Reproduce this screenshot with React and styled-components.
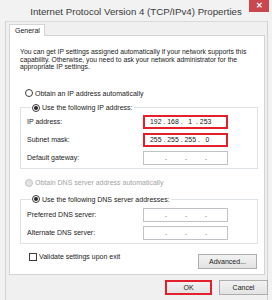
import React from 'react';
import styled, { createGlobalStyle } from 'styled-components';

const GlobalStyle = createGlobalStyle`
  html, body {
    margin: 0;
    padding: 0;
    background: #f0f0f0;
  }
  body {
    font-family: 'Liberation Sans', Arial, sans-serif;
    color: #1a1a1a;
  }
`;

const Window = styled.div`
  width: 272px;
  height: 300px;
  display: flex;
  flex-direction: column;
  background: #f2f2f2;
  overflow: hidden;
`;

const TitleBar = styled.div`
  height: 21px;
  display: grid;
  grid-template-columns: 1fr auto 1fr;
  align-items: start;
  flex-shrink: 0;
`;

const Title = styled.div`
  font-size: 9.7px;
  line-height: 12px;
  color: #3a3a3a;
  padding-top: 6px;
  white-space: nowrap;
`;

const CloseSlot = styled.div`
  display: flex;
  justify-content: flex-end;
  padding-right: 3px;
`;

const CloseButton = styled.div`
  width: 20px;
  height: 12px;
  background: #c9474d;
  color: #fff;
  font-size: 8px;
  font-weight: bold;
  line-height: 12px;
  text-align: center;
`;

const Body = styled.div`
  flex: 1;
  margin: 0 4px 0 5px;
  border-left: 1px solid #d2d2d2;
  border-right: 1px solid #d2d2d2;
  border-top: 1px solid #d9d9d9;
  background: #f0f0f0;
  padding: 2px 2px 0 3px;
  display: flex;
  flex-direction: column;
`;

const TabStrip = styled.div`
  display: flex;
  position: relative;
  z-index: 1;
  margin-bottom: -1px;
`;

const Tab = styled.div`
  width: 36px;
  height: 12px;
  box-sizing: border-box;
  background: #fff;
  border: 1px solid #d4d4d4;
  border-bottom: none;
  font-size: 7px;
  line-height: 11px;
  padding-left: 5px;
`;

const Panel = styled.div`
  width: 256px;
  height: 240px;
  box-sizing: border-box;
  background: #fff;
  border: 1px solid #d4d4d4;
  display: flex;
  flex-direction: column;
  padding: 12px 7px 0 10px;
`;

const Intro = styled.p`
  margin: 0;
  font-size: 6.8px;
  line-height: 7.6px;
  color: #1a1a1a;
`;

const OptionRow = styled.label`
  display: flex;
  align-items: center;
  gap: 2px;
  height: 10px;
  font-size: 7px;
  color: ${p => (p.disabled ? '#a3a3a3' : '#1a1a1a')};
  margin-left: 5px;
  margin-top: ${p => p.top}px;
`;

const Radio = styled.span`
  width: 8px;
  height: 8px;
  box-sizing: border-box;
  border-radius: 50%;
  border: 1px solid ${p => (p.disabled ? '#c4c4c4' : '#3c3c3c')};
  background: ${p => (p.disabled ? '#e4e4e4' : '#fff')};
  display: flex;
  align-items: center;
  justify-content: center;
  flex-shrink: 0;
  &::after {
    content: '';
    display: ${p => (p.checked ? 'block' : 'none')};
    width: 4px;
    height: 4px;
    border-radius: 50%;
    background: #262626;
  }
`;

const Group = styled.fieldset`
  margin: ${p => p.top}px 0 0 0;
  padding: ${p => p.padTop}px 0 ${p => p.bottom}px 6px;
  border: 1px solid #dce2e6;
  width: 238px;
  box-sizing: border-box;
  display: flex;
  flex-direction: column;
  gap: 4px;
`;

const Legend = styled.legend`
  padding: 0 1px;
  margin-left: 4px;
  height: 10px;
  display: flex;
  align-items: center;
  gap: 2px;
  font-size: 7px;
  color: #1a1a1a;
`;

const FieldRow = styled.div`
  display: flex;
  align-items: center;
  justify-content: space-between;
  padding-right: 29px;
  height: 14px;
`;

const FieldLabel = styled.span`
  font-size: 7px;
  color: #1a1a1a;
`;

const IpBox = styled.div`
  width: 85px;
  height: 14px;
  box-sizing: border-box;
  border: ${p => (p.highlight ? '2px solid #e3202c' : '1px solid #bfc3c8')};
  background: #fff;
  display: flex;
  align-items: center;
  font-size: 6.9px;
  color: #1a1a1a;
  white-space: pre;
  padding-left: ${p => (p.highlight ? 5 : 21)}px;
  gap: ${p => (p.highlight ? 0 : 18)}px;
`;

const Dot = styled.span`
  width: 2px;
  text-align: center;
`;

const BottomRow = styled.div`
  display: flex;
  justify-content: space-between;
  align-items: flex-start;
  margin-top: 9px;
  padding-left: 9px;
`;

const Checkbox = styled.span`
  width: 8px;
  height: 8px;
  box-sizing: border-box;
  border: 1px solid #3c3c3c;
  background: #fff;
  flex-shrink: 0;
`;

const CheckRow = styled.label`
  display: flex;
  align-items: center;
  gap: 2px;
  font-size: 7px;
  height: 8px;
`;

const Button = styled.button`
  width: ${p => p.w}px;
  height: 15px;
  box-sizing: border-box;
  padding: 0;
  font-family: 'Liberation Sans', Arial, sans-serif;
  font-size: 7px;
  color: #1a1a1a;
  background: linear-gradient(#f2f2f2, #e3e3e3);
  border: ${p => (p.highlight ? '2px solid #e3202c' : '1px solid #adadad')};
  margin-top: ${p => p.top || 0}px;
`;

const ButtonBar = styled.div`
  display: flex;
  justify-content: flex-end;
  gap: 7px;
  margin-top: 5px;
  margin-right: -3px;
`;

function IpField({ value, highlight }) {
  if (value) {
    return <IpBox highlight={highlight}>{value}</IpBox>;
  }
  return (
    <IpBox>
      <Dot>.</Dot>
      <Dot>.</Dot>
      <Dot>.</Dot>
    </IpBox>
  );
}

export default function App() {
  return (
    <Window>
      <GlobalStyle />
      <TitleBar>
        <div />
        <Title>Internet Protocol Version 4 (TCP/IPv4) Properties</Title>
        <CloseSlot>
          <CloseButton>✕</CloseButton>
        </CloseSlot>
      </TitleBar>
      <Body>
        <TabStrip>
          <Tab>General</Tab>
        </TabStrip>
        <Panel>
          <Intro>
            You can get IP settings assigned automatically if your network supports
            this capability. Otherwise, you need to ask your network administrator
            for the appropriate IP settings.
          </Intro>
          <OptionRow top={17.5}>
            <Radio />
            Obtain an IP address automatically
          </OptionRow>
          <Group top={4.5} padTop={2} bottom={3}>
            <Legend>
              <Radio checked />
              Use the following IP address:
            </Legend>
            <FieldRow>
              <FieldLabel>IP address:</FieldLabel>
              <IpField highlight value="192 . 168 .   1  . 253" />
            </FieldRow>
            <FieldRow>
              <FieldLabel>Subnet mask:</FieldLabel>
              <IpField highlight value="255 . 255 . 255 .   0" />
            </FieldRow>
            <FieldRow>
              <FieldLabel>Default gateway:</FieldLabel>
              <IpField />
            </FieldRow>
          </Group>
          <OptionRow top={9} disabled>
            <Radio disabled />
            Obtain DNS server address automatically
          </OptionRow>
          <Group top={6.5} padTop={3.5} bottom={3}>
            <Legend>
              <Radio checked />
              Use the following DNS server addresses:
            </Legend>
            <FieldRow>
              <FieldLabel>Preferred DNS server:</FieldLabel>
              <IpField />
            </FieldRow>
            <FieldRow>
              <FieldLabel>Alternate DNS server:</FieldLabel>
              <IpField />
            </FieldRow>
          </Group>
          <BottomRow>
            <CheckRow>
              <Checkbox />
              Validate settings upon exit
            </CheckRow>
            <Button w={59} top={1}>Advanced...</Button>
          </BottomRow>
        </Panel>
        <ButtonBar>
          <Button w={47} highlight>OK</Button>
          <Button w={49}>Cancel</Button>
        </ButtonBar>
      </Body>
    </Window>
  );
}
